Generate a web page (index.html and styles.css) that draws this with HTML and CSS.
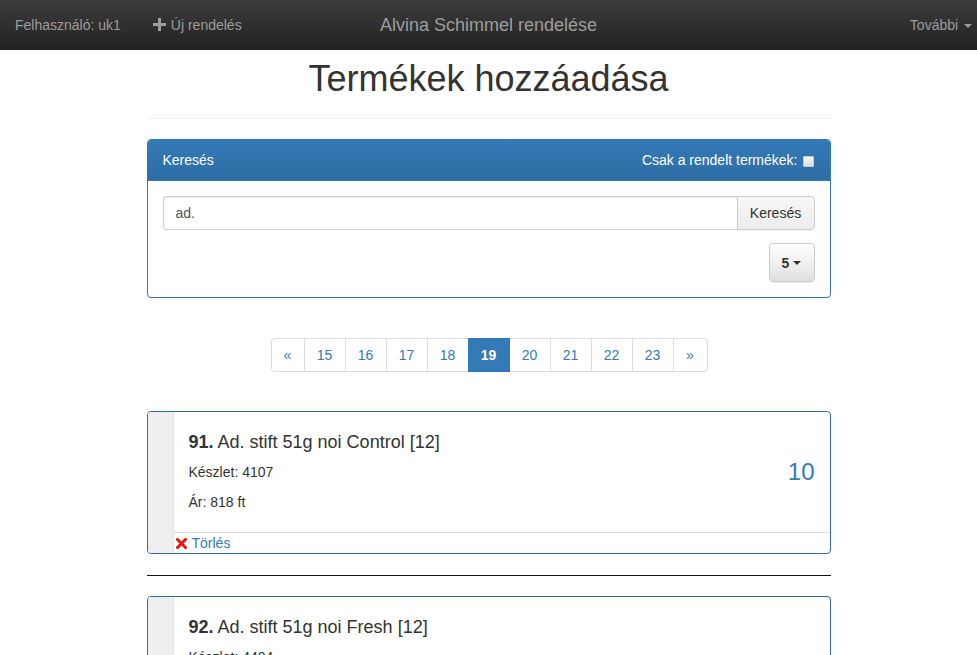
FILE: index.html
```html
<!DOCTYPE html>
<html lang="hu">
<head>
<meta charset="utf-8">
<title>Termékek hozzáadása</title>
<link rel="stylesheet" href="styles.css">
</head>
<body>
<nav class="navbar">
  <div class="nav-left">
    <span class="nav-item nav-user">Felhasználó: uk1</span>
    <a class="nav-item nav-link" href="#"><svg class="plus" width="13" height="13" viewBox="0 0 13 13"><path d="M5 0h3v5h5v3H8v5H5V8H0V5h5z" fill="#9d9d9d"/></svg>Új rendelés</a>
  </div>
  <div class="nav-title">Alvina Schimmel rendelése</div>
  <div class="nav-right">
    <a class="nav-item nav-link" href="#">További <span class="caret"></span></a>
  </div>
</nav>

<main class="container">
  <header class="page-header">
    <h1>Termékek hozzáadása</h1>
  </header>

  <section class="panel">
    <div class="panel-heading">
      <span class="panel-title">Keresés</span>
      <label class="only-ordered">Csak a rendelt termékek: <input type="checkbox" class="chk"></label>
    </div>
    <div class="panel-body">
      <div class="input-group">
        <input class="form-control" type="text" value="ad.">
        <button class="btn btn-search">Keresés</button>
      </div>
      <div class="page-size-row">
        <button class="btn btn-size">5 <span class="caret dark"></span></button>
      </div>
    </div>
  </section>

  <nav class="pager-wrap">
    <ul class="pagination">
      <li class="edge-first"><a href="#">«</a></li>
      <li><a href="#">15</a></li>
      <li><a href="#">16</a></li>
      <li><a href="#">17</a></li>
      <li><a href="#">18</a></li>
      <li class="active"><a href="#">19</a></li>
      <li><a href="#">20</a></li>
      <li><a href="#">21</a></li>
      <li><a href="#">22</a></li>
      <li><a href="#">23</a></li>
      <li class="edge-last"><a href="#">»</a></li>
    </ul>
  </nav>

  <article class="item">
    <div class="item-strip"></div>
    <div class="item-main">
      <div class="item-body">
        <div class="item-info">
          <h4 class="item-title"><b>91.</b> Ad. stift 51g noi Control [12]</h4>
          <p>Készlet: 4107</p>
          <p>Ár: 818 ft</p>
        </div>
        <div class="item-qty">10</div>
      </div>
      <div class="item-footer">
        <svg class="remove-icon" width="11" height="11" viewBox="0 0 11 11"><path d="M1.5 1.5l8 8M9.5 1.5l-8 8" stroke="#e8120c" stroke-width="3" stroke-linecap="square"/></svg><a href="#" class="remove-link">Törlés</a>
      </div>
    </div>
  </article>

  <hr class="sep">

  <article class="item">
    <div class="item-strip"></div>
    <div class="item-main">
      <div class="item-body">
        <div class="item-info">
          <h4 class="item-title"><b>92.</b> Ad. stift 51g noi Fresh [12]</h4>
          <p>Készlet: 4404</p>
          <p>Ár: 818 ft</p>
        </div>
      </div>
    </div>
  </article>
</main>
</body>
</html>
```

FILE: styles.css
```css
* { box-sizing: border-box; }
html, body { margin: 0; padding: 0; }
body {
  font-family: "Liberation Sans", Arial, sans-serif;
  font-size: 14px;
  line-height: 20px;
  color: #333;
  background: #fff;
}
a { text-decoration: none; color: #337ab7; }

.navbar {
  height: 50px;
  background: linear-gradient(to bottom, #3c3c3c 0, #222 100%);
  display: flex;
  align-items: center;
  color: #9d9d9d;
}
.nav-left { display: flex; align-items: center; flex: 1; }
.nav-right { display: flex; align-items: center; flex: 1; justify-content: flex-end; }
.nav-item { color: #9d9d9d; line-height: 20px; }
.nav-user { padding-left: 15px; }
.nav-left .nav-link { margin-left: 32px; display: flex; align-items: center; }
.plus { margin-right: 5px; position: relative; top: -1px; }
.nav-title {
  font-size: 18px;
  color: #9d9d9d;
  line-height: 20px;
  text-align: center;
  flex: none;
}
.nav-right .nav-link { padding-right: 5px; }
.caret {
  display: inline-block;
  width: 0; height: 0;
  margin-left: 2px;
  vertical-align: middle;
  border-top: 4px solid #9d9d9d;
  border-left: 4px solid transparent;
  border-right: 4px solid transparent;
}
.caret.dark { border-top-color: #333; }

.container { width: 684px; margin: 0 auto; }

.page-header {
  padding-top: 9px;
  padding-bottom: 10px;
  border-bottom: 1px solid #eee;
  margin-bottom: 20px;
}
.page-header h1 {
  margin: 0 0 10px;
  font-size: 36px;
  font-weight: 500;
  line-height: 39px;
  text-align: center;
  color: #333;
}

.panel {
  border: 1px solid #337ab7;
  border-radius: 4px;
  box-shadow: 0 1px 2px rgba(0,0,0,.05);
}
.panel-heading {
  display: flex;
  justify-content: space-between;
  align-items: center;
  padding: 10px 15px;
  height: 41px;
  color: #fff;
  background: linear-gradient(to bottom, #337ab7 0, #2e6da4 100%);
  border-bottom: 1px solid #337ab7;
  border-radius: 3px 3px 0 0;
}
.panel-title { font-size: 14px; }
.only-ordered { display: flex; align-items: center; font-size: 14px; }
.chk {
  -webkit-appearance: none;
  appearance: none;
  margin: 2px 1px 0 5px;
  width: 11px;
  height: 11px;
  background: linear-gradient(to bottom, #f6f6f6, #dedede);
  border: 1px solid #c8c8c8;
  border-radius: 1px;
}
.panel-body { padding: 15px; }
.input-group { display: flex; height: 34px; }
.form-control {
  flex: 1;
  height: 34px;
  padding: 6px 12px;
  font-family: inherit;
  font-size: 14px;
  color: #555;
  border: 1px solid #ccc;
  border-right: 0;
  border-radius: 4px 0 0 4px;
  box-shadow: inset 0 1px 1px rgba(0,0,0,.075);
  outline: none;
}
.btn {
  font-family: inherit;
  font-size: 14px;
  color: #333;
  background: linear-gradient(to bottom, #fff 0, #e0e0e0 100%);
  border: 1px solid #ccc;
  border-radius: 4px;
  box-shadow: inset 0 1px 0 rgba(255,255,255,.15), 0 1px 1px rgba(0,0,0,.075);
  cursor: pointer;
}
.btn-search {
  width: 78px;
  height: 34px;
  padding: 6px 12px;
  border-radius: 0 4px 4px 0;
  background: linear-gradient(to bottom, #f7f7f7 0, #ececec 100%);
}
.page-size-row { display: flex; justify-content: flex-end; margin-top: 13px; }
.btn-size {
  width: 46px;
  height: 39px;
  font-weight: bold;
  padding: 0;
  display: flex;
  align-items: center;
  justify-content: center;
}
.btn-size .caret { margin-left: 4px; }

.pager-wrap { display: flex; justify-content: center; margin: 40px 0 39px; padding-left: 1px; }
.pagination {
  display: flex;
  list-style: none;
  margin: 0;
  padding: 0;
}
.pagination li a {
  display: block;
  width: 42px;
  padding: 6px 0;
  text-align: center;
  line-height: 20px;
  color: #337ab7;
  border: 1px solid #ddd;
  margin-left: -1px;
  background: #fff;
}
.pagination li.edge-first a { width: 34px; margin-left: 0; border-radius: 4px 0 0 4px; }
.pagination li.edge-last a { width: 35px; border-radius: 0 4px 4px 0; }
.pagination li.active a {
  background: #337ab7;
  border-color: #337ab7;
  color: #fff;
  position: relative;
  font-weight: bold;
}

.item {
  display: flex;
  border: 1px solid #2e6da4;
  border-radius: 4px;
  overflow: hidden;
  background: #fff;
}
.item-strip { width: 26px; background: #eee; border-right: 1px solid #e3e3e3; flex: none; }
.item-main { flex: 1; display: flex; flex-direction: column; }
.item-body {
  display: flex;
  justify-content: space-between;
  align-items: center;
  padding: 15px 15px 10px;
}
.item-title {
  margin: 5px 0 10px;
  font-size: 18px;
  font-weight: normal;
  line-height: 20px;
  color: #333;
}
.item-title b { font-weight: bold; }
.item-info p { margin: 0 0 10px; font-size: 14px; line-height: 20px; }
.item-qty { font-size: 24px; color: #337ab7; line-height: 26px; padding-bottom: 6px; }
.item-footer {
  border-top: 1px solid #ddd;
  line-height: 20px;
  height: 21px;
  padding-left: 2px;
  font-size: 14px;
  display: flex;
  align-items: center;
}
.remove-icon { margin-right: 5px; flex: none; }
.remove-link { color: #337ab7; }

.sep {
  border: 0;
  border-top: 1px solid #111;
  margin: 21px 0 20px;
}
```
